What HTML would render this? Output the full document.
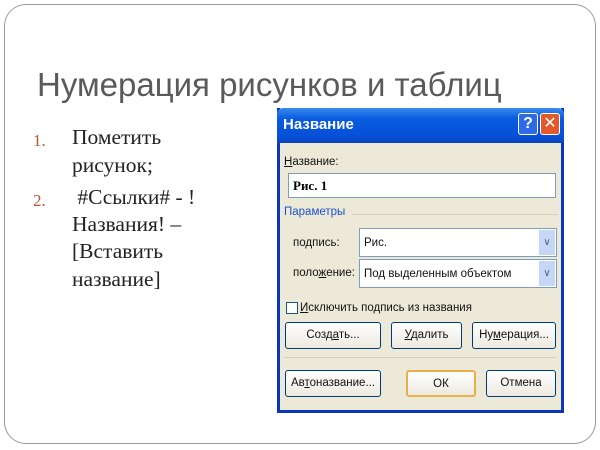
<!DOCTYPE html>
<html><head><meta charset="utf-8"><style>
*{margin:0;padding:0;box-sizing:border-box}
body{width:600px;height:450px;background:#fff;position:relative;overflow:hidden;font-family:"Liberation Sans","DejaVu Sans",sans-serif}
.frame{position:absolute;left:4px;top:4px;width:592px;height:440px;border:1px solid #9a9a9a;border-radius:22px}
.title{position:absolute;left:37px;top:66px;font-size:33px;color:#5a5a5a;white-space:nowrap}
.list{position:absolute;left:0;top:124px;font-family:"Liberation Serif",serif;font-size:21.5px;color:#222;line-height:27px}
.num{position:absolute;left:33px;color:#b5553a;font-size:17px}
.t{position:absolute;left:72px;white-space:nowrap}
.dlg{position:absolute;left:277px;top:108px;width:287px;height:305px;background:#ece9d8;border:3px solid #0b36b8;border-top:none}
.tb{position:absolute;left:-3px;top:0;width:287px;height:35px;background:linear-gradient(#3a8cf0,#0a5ce0 30%,#0550d8 80%,#0a44c0);border-radius:6px 6px 0 0}
.tb span{position:absolute;left:6px;top:8px;color:#fff;font-weight:bold;font-size:15px}
.qb,.xb{position:absolute;top:5px;width:20px;height:22px;border:1px solid #fff;border-radius:3px;color:#fff;font-weight:bold;font-size:16px;text-align:center;line-height:20px}
.qb{left:241px;background:#2c6ae8}
.xb{left:263px;background:#e05a2a}
.a{position:absolute;font-size:11.5px;color:#111;white-space:nowrap}
.box{position:absolute;background:#fff;border:1px solid #7f9db9}
.btn{position:absolute;height:27px;border:1px solid #003c74;border-radius:3px;background:linear-gradient(#fff,#ece9e0);font-size:11.5px;text-align:center;line-height:25px;color:#111}
.dd{position:absolute;right:1px;top:1px;width:16px;bottom:1px;background:#c6d6f7;color:#4d6185;font-size:10px;text-align:center;line-height:26px}
</style></head><body>
<div class="frame"></div>
<div class="title">Нумерация рисунков и таблиц</div>
<div class="list">
<div class="num" style="top:3px">1.</div>
<div class="t" style="top:0">Пометить</div>
<div class="t" style="top:28px">рисунок;</div>
<div class="num" style="top:63px">2.</div>
<div class="t" style="top:60px">&nbsp;#Ссылки# - !</div>
<div class="t" style="top:87px">Названия! –</div>
<div class="t" style="top:114px">[Вставить</div>
<div class="t" style="top:142px">название]</div>
</div>
<div class="dlg">
<div class="tb"><span>Название</span><div class="qb">?</div><div class="xb">✕</div></div>
<div class="a" style="left:4px;top:48px"><u>Н</u>азвание:</div>
<div class="box" style="left:8px;top:65px;width:268px;height:25px"><span style="position:absolute;left:4px;top:4px;font-family:'Liberation Serif',serif;font-weight:bold;font-size:13px">Рис. 1</span></div>
<div class="a" style="left:4px;top:98px;color:#1a52c8">Параметры</div>
<div style="position:absolute;left:72px;top:106px;width:206px;height:1px;background:#d0d0bf"></div>
<div class="a" style="left:13px;top:129px">по<u>д</u>пись:</div>
<div class="box" style="left:79px;top:120px;width:198px;height:29px"><span class="a" style="left:4px;top:8px">Рис.</span><div class="dd">&#8744;</div></div>
<div class="a" style="left:13px;top:159px">поло<u>ж</u>ение:</div>
<div class="box" style="left:79px;top:151px;width:198px;height:29px"><span class="a" style="left:4px;top:8px">Под выделенным объектом</span><div class="dd">&#8744;</div></div>
<div style="position:absolute;left:6px;top:194px;width:12px;height:12px;border:1px solid #1c5180;background:#fff"></div>
<div class="a" style="left:20px;top:194px"><u>И</u>сключить подпись из названия</div>
<div class="btn" style="left:5px;top:214px;width:96px">Созд<u>а</u>ть...</div>
<div class="btn" style="left:111px;top:214px;width:71px"><u>У</u>далить</div>
<div class="btn" style="left:192px;top:214px;width:84px">Ну<u>м</u>ерация...</div>
<div style="position:absolute;left:4px;top:249px;width:272px;height:1px;background:#d0d0bf"></div>
<div class="btn" style="left:5px;top:262px;width:96px">Ав<u>т</u>оназвание...</div>
<div class="btn" style="left:126px;top:262px;width:70px;border:2px solid #e8b04a">ОК</div>
<div class="btn" style="left:206px;top:262px;width:70px">Отмена</div>
</div>
</body></html>
